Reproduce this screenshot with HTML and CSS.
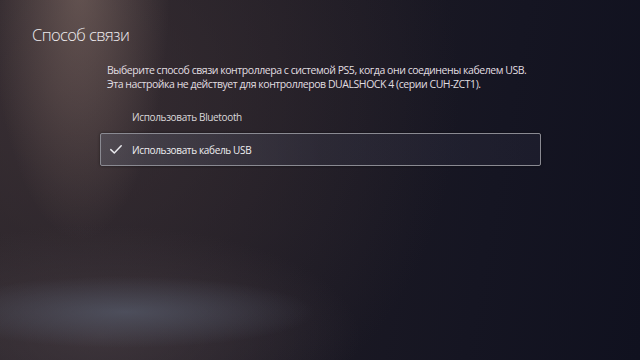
FILE: index.html
```html
<!DOCTYPE html>
<html lang="ru">
<head>
<meta charset="utf-8">
<link rel="stylesheet" href="styles.css">
</head>
<body>
<div class="screen">
  <h1 class="title">Способ связи</h1>
  <div class="content">
    <p class="desc">Выберите способ связи контроллера с системой PS5, когда они соединены кабелем USB.<br>Эта настройка не действует для контроллеров DUALSHOCK 4 (серии CUH-ZCT1).</p>
    <ul class="options">
      <li class="option"><span class="check"></span><span class="label">Использовать Bluetooth</span></li>
      <li class="option selected"><span class="check"><svg viewBox="0 0 12 9" width="12" height="9"><path d="M0.8 4.6 L4.3 8 L11.2 0.8" fill="none" stroke="#e8e8ec" stroke-width="1.5" stroke-linecap="round" stroke-linejoin="round"/></svg></span><span class="label">Использовать кабель USB</span></li>
    </ul>
  </div>
</div>
</body>
</html>
```
FILE: styles.css
```css
html, body {
  margin: 0;
  padding: 0;
}
body {
  width: 640px;
  height: 360px;
  overflow: hidden;
  font-family: "Open Sans", "Noto Sans", sans-serif;
  color: #e6e4e6;
}
.screen {
  width: 640px;
  height: 360px;
  box-sizing: border-box;
  padding: 25px 0 0 32px;
  background:
    radial-gradient(ellipse 90px 260px at 80px -20px, rgba(150,125,115,0.5), rgba(150,125,115,0) 100%),
    radial-gradient(ellipse 190px 36px at 125px 312px, rgba(90,98,116,0.6), rgba(90,98,116,0) 100%),
    radial-gradient(ellipse 260px 110px at 100px 335px, rgba(72,62,68,0.65), rgba(72,62,68,0) 100%),
    radial-gradient(ellipse 400px 400px at 60px 90px, rgba(62,50,54,0.75), rgba(62,50,54,0) 100%),
    linear-gradient(100deg, #262228 0%, #1e1b24 40%, #151522 75%, #10111f 100%);
}
.title {
  margin: 0;
  font-size: 16.5px;
  font-weight: 300;
  line-height: 20px;
  letter-spacing: -0.6px;
  color: #eeecee;
}
.content {
  margin: 18px 0 0 75px;
  width: 440px;
}
.desc {
  margin: 0;
  font-size: 10.5px;
  line-height: 14px;
  font-weight: 400;
  letter-spacing: -0.45px;
  color: #e0dee0;
}
.options {
  list-style: none;
  margin: 9px 0 0 -7px;
  padding: 0;
}
.option {
  display: flex;
  align-items: center;
  height: 33px;
  box-sizing: border-box;
  border: 1.5px solid transparent;
  border-radius: 2px;
  width: 441px;
  font-size: 10px;
  letter-spacing: -0.35px;
  color: #dad8da;
}
.option.selected {
  border-color: #8a8a92;
  background: linear-gradient(90deg, rgba(95,95,108,0.45), rgba(60,60,78,0.35) 50%, rgba(40,40,58,0.4));
  box-shadow: 0 0 3px rgba(0,0,0,0.5);
  color: #eeeef0;
}
.check {
  width: 12px;
  height: 9px;
  margin-left: 9px;
  margin-right: 10px;
  display: flex;
}
.label {
  white-space: nowrap;
}
```
